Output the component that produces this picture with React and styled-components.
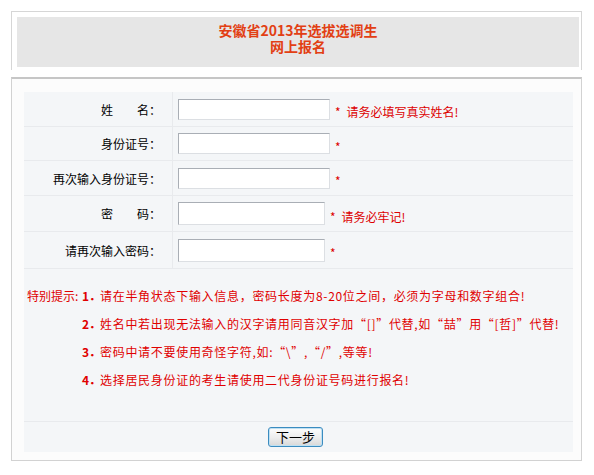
import React from "react";
import styled, { createGlobalStyle } from "styled-components";

const GlobalStyle = createGlobalStyle`
  html, body {
    margin: 0;
    padding: 0;
    background: #fff;
  }
  body {
    font-family: "Noto Sans CJK SC", "Noto Sans", sans-serif;
    font-size: 12px;
    color: #000;
  }
`;

const Page = styled.div`
  width: 571px;
  padding: 11px 0 0 11px;
`;

const TitlePanel = styled.div`
  border: 1px solid #d6d6d6;
  border-bottom: none;
  padding: 5px 2px 3px 5px;
`;

const TitleBox = styled.div`
  height: 50px;
  box-sizing: border-box;
  padding-top: 5px;
  background: #e6e6e6;
  text-align: center;
  color: #e23f14;
  font-size: 14px;
  font-weight: bold;
  line-height: 16px;
`;

const FormPanel = styled.div`
  margin-top: 7px;
  border: 1px solid #d2d2d2;
  border-top: 2px solid #c6c6c6;
  background: #fcfcfc;
  padding: 13px 8px 8px 12px;
`;

const Table = styled.div`
  background: #f4f6f8;
`;

const Row = styled.div`
  display: grid;
  grid-template-columns: 149px 1fr;
  height: ${(p) => p.$h}px;
  box-sizing: border-box;
  border-bottom: 1px solid #e8eaed;
`;

const Label = styled.div`
  display: flex;
  align-items: center;
  justify-content: flex-end;
  padding-right: 11px;
  border-right: 1px solid #e8eaed;
  white-space: pre;
`;

const Field = styled.div`
  display: flex;
  align-items: center;
  padding-left: 5px;
`;

const Input = styled.input`
  box-sizing: border-box;
  width: ${(p) => (p.$narrow ? 147 : 152)}px;
  height: ${(p) => (p.$narrow ? 23 : 21)}px;
  margin: 0;
  border: 1px solid;
  border-color: #a9aeb5 #dcdfe3 #dcdfe3 #a9aeb5;
  background: #fff;
`;

const Hint = styled.span`
  color: #dd0000;
  margin-left: 5px;
  padding-top: 5px;
  white-space: nowrap;
`;

const Star = styled.span`
  margin-right: 6px;
`;

const TipsRow = styled.div`
  display: grid;
  grid-template-columns: 55px 1fr;
  padding: 13px 0 27px 3px;
  color: #e00000;
  line-height: 28px;
  white-space: nowrap;
`;

const TipsTitle = styled.div`
  grid-row: 1 / span 4;
`;

const Tip = styled.div`
  letter-spacing: 0.7px;
`;

const Num = styled.span`
  display: inline-block;
  width: 18px;
  font-weight: bold;
  letter-spacing: 0;
`;

const ButtonRow = styled.div`
  height: 31px;
  display: flex;
  align-items: center;
  justify-content: center;
  border-top: 1px solid #e8eaed;
  box-sizing: border-box;
  padding-right: 6px;
`;

const NextButton = styled.button`
  width: 55px;
  height: 20px;
  padding: 0;
  border: 1px solid #3b8cc0;
  border-radius: 3px;
  background: linear-gradient(#fdfdfd, #ececec 55%, #d8d8d8);
  box-shadow: inset 0 0 0 1px #bfe0f2;
  font-family: "Noto Sans CJK SC", sans-serif;
  font-size: 13px;
  color: #000;
  line-height: 18px;
`;

const fields = [
  { label: "姓　　名：", h: 35, hint: "请务必填写真实姓名!" },
  { label: "身份证号：", h: 34 },
  { label: "再次输入身份证号：", h: 35 },
  { label: "密　　码：", h: 36, narrow: true, hint: "请务必牢记!" },
  { label: "请再次输入密码：", h: 37, narrow: true },
];

const tips = [
  "请在半角状态下输入信息，密码长度为8-20位之间，必须为字母和数字组合!",
  "姓名中若出现无法输入的汉字请用同音汉字加“[]”代替,如“喆”用“[哲]”代替!",
  "密码中请不要使用奇怪字符,如:“\\”,“/”,等等!",
  "选择居民身份证的考生请使用二代身份证号码进行报名!",
];

export default function App() {
  return (
    <>
      <GlobalStyle />
      <Page>
        <TitlePanel>
          <TitleBox>
            安徽省2013年选拔选调生
            <br />
            网上报名
          </TitleBox>
        </TitlePanel>
        <FormPanel>
          <Table>
            {fields.map((f) => (
              <Row key={f.label} $h={f.h}>
                <Label>{f.label}</Label>
                <Field>
                  <Input type={f.narrow ? "password" : "text"} $narrow={f.narrow} />
                  <Hint>
                    <Star>*</Star>
                    {f.hint}
                  </Hint>
                </Field>
              </Row>
            ))}
            <TipsRow>
              <TipsTitle>特别提示:</TipsTitle>
              {tips.map((t, i) => (
                <Tip key={i}>
                  <Num>{i + 1}．</Num>
                  {t}
                </Tip>
              ))}
            </TipsRow>
            <ButtonRow>
              <NextButton type="button">下一步</NextButton>
            </ButtonRow>
          </Table>
        </FormPanel>
      </Page>
    </>
  );
}
